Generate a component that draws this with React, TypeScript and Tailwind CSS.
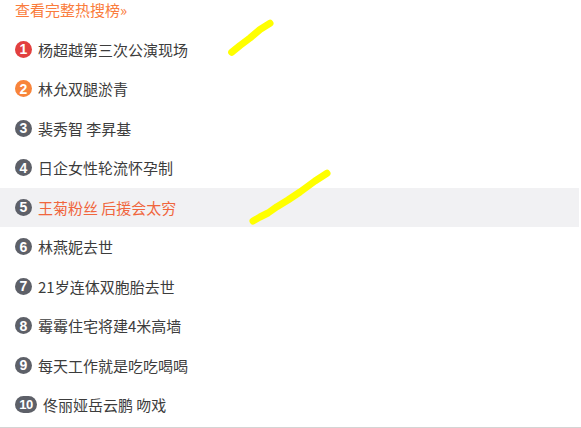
import React from "react";

const items = [
  "杨超越第三次公演现场",
  "林允双腿淤青",
  "裴秀智 李昇基",
  "日企女性轮流怀孕制",
  "王菊粉丝 后援会太穷",
  "林燕妮去世",
  "21岁连体双胞胎去世",
  "霉霉住宅将建4米高墙",
  "每天工作就是吃吃喝喝",
  "佟丽娅岳云鹏 吻戏",
];

function Badge({ n }: { n: number }) {
  const color = n === 1 ? "bg-[#e2403f]" : n === 2 ? "bg-[#f8843a]" : "bg-[#5d6068]";
  const w = n >= 10 ? "w-[22px] text-[13px] tracking-[-0.5px]" : "w-[17px] text-[14px]";
  return (
    <span
      className={`${color} ${w} h-[17px] rounded-full flex items-center justify-center text-white font-bold leading-none shrink-0`}
      style={{ fontFamily: '"Liberation Sans", Arial, sans-serif' }}
    >
      {n}
    </span>
  );
}

export default function App() {
  return (
    <div
      className="relative w-[581px] h-[428px] bg-white border-b border-[#d4d4d4] overflow-hidden"
      style={{ fontFamily: '"Noto Sans CJK SC", "Noto Sans", sans-serif' }}
    >
      <div className="h-[29.5px] pl-[15px] text-[15px] leading-[20px] text-[#fa7c3c]">
        查看完整热搜榜»
      </div>
      <div className="w-[579px] flex flex-col">
        {items.map((t, i) => {
          const n = i + 1;
          const active = n === 5;
          return (
            <div
              key={n}
              className={`h-[39.5px] flex items-center pl-[15px] gap-[6px] ${active ? "bg-[#f1f1f3]" : ""}`}
            >
              <Badge n={n} />
              <span className={`text-[15px] leading-none ${active ? "text-[#f0663d]" : "text-[#3c3c3c]"}`}>{t}</span>
            </div>
          );
        })}
      </div>
      <svg className="absolute left-0 top-0 pointer-events-none" width="581" height="428">
        <polyline
          points="231.7,52.3 240,45.5 250,38 260,29.5 270,23.3"
          fill="none"
          stroke="#ffff00"
          strokeWidth="7"
          strokeLinecap="round"
          strokeLinejoin="round"
        />
        <polyline
          points="253,221 260,217 268,213 277,206.7 288,200 300,192 315,181 327,173.3"
          fill="none"
          stroke="#ffff00"
          strokeWidth="7"
          strokeLinecap="round"
          strokeLinejoin="round"
        />
      </svg>
    </div>
  );
}
